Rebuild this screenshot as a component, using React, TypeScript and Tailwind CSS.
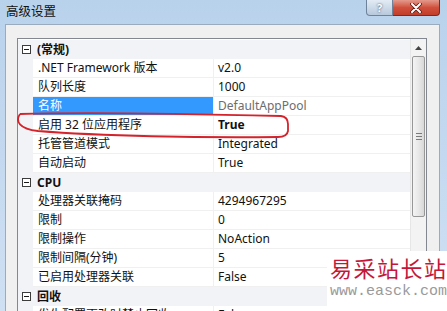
import React from "react";

type Row = { name: string; value: string; selected?: boolean; bold?: boolean };
type Category = { title: string; rows: Row[] };

const CATEGORIES: Category[] = [
  {
    title: "(常规)",
    rows: [
      { name: ".NET Framework 版本", value: "v2.0" },
      { name: "队列长度", value: "1000" },
      { name: "名称", value: "DefaultAppPool", selected: true },
      { name: "启用 32 位应用程序", value: "True", bold: true },
      { name: "托管管道模式", value: "Integrated" },
      { name: "自动启动", value: "True" },
    ],
  },
  {
    title: "CPU",
    rows: [
      { name: "处理器关联掩码", value: "4294967295" },
      { name: "限制", value: "0" },
      { name: "限制操作", value: "NoAction" },
      { name: "限制间隔(分钟)", value: "5" },
      { name: "已启用处理器关联", value: "False" },
    ],
  },
  {
    title: "回收",
    rows: [{ name: "发生配置更改时禁止回收", value: "False" }],
  },
];

function MinusBox() {
  return (
    <div className="w-[9px] h-[9px] border border-[#3c3c3c] bg-white flex items-center justify-center">
      <div className="w-[5px] h-px bg-[#1a1a1a]" />
    </div>
  );
}

function CategoryRow({ title }: { title: string }) {
  return (
    <div className="flex h-[19px] items-center bg-[#f1f3f7]">
      <div className="w-[15px] flex justify-center pl-[1px]">
        <MinusBox />
      </div>
      <span className="pl-[4px] font-bold text-[12px] text-[#111]">{title}</span>
    </div>
  );
}

function PropRow({ row }: { row: Row }) {
  return (
    <div className="flex h-[19px]">
      <div className="w-[15px] bg-[#f1f3f7]" />
      <div
        className={`w-[180px] flex items-center pl-[5px] border-b border-[#f0f0f0] ${
          row.selected ? "bg-[#3399ff] text-white" : "text-[#111]"
        }`}
      >
        {row.name}
      </div>
      <div className="w-px bg-[#f0f0f0]" />
      <div
        className={`flex-1 flex items-center pl-[4px] border-b border-[#f0f0f0] ${
          row.selected ? "text-[#6d6d6d]" : "text-[#111]"
        } ${row.bold ? "font-bold" : ""}`}
      >
        {row.value}
      </div>
    </div>
  );
}

function Scrollbar() {
  return (
    <div className="w-[16px] bg-[#f3f3f3] border-l border-[#e6e6e6] flex flex-col">
      <div className="h-[17px] flex items-center justify-center">
        <svg width="7" height="4" viewBox="0 0 7 4">
          <path d="M0 4 L3.5 0 L7 4 Z" fill="#444" />
        </svg>
      </div>
      <div className="mx-[1px] h-[161px] rounded-[2px] border border-[#979797] bg-gradient-to-r from-[#f4f4f4] via-[#e8e8e8] to-[#d8d8d8] flex items-center justify-center">
        <div className="flex flex-col gap-[2px]">
          <div className="w-[6px] h-px bg-[#7a7a7a]" />
          <div className="w-[6px] h-px bg-[#7a7a7a]" />
          <div className="w-[6px] h-px bg-[#7a7a7a]" />
        </div>
      </div>
    </div>
  );
}

export default function App() {
  return (
    <div className="relative w-[447px] h-[311px] overflow-hidden bg-gradient-to-b from-[#b9d2ec] to-[#cfe0f3] font-['Noto_Sans','Noto_Sans_CJK_SC',sans-serif] text-[12px]">
      {/* Title bar */}
      <div className="h-[24px] flex items-start">
        <span className="pl-[6px] pt-[4px] text-[12.5px] text-[#111] leading-[16px]">高级设置</span>
        <div className="ml-auto mr-[7px] flex">
          <div className="w-[27px] h-[16px] rounded-bl-[4px] border border-t-0 border-[#6f829b] bg-gradient-to-b from-[#e3ecf5] to-[#b7c8dc] flex items-center justify-center">
            <span className="font-bold text-[11px] leading-[14px] text-white [text-shadow:0_0_2px_#2b3a4e]">?</span>
          </div>
          <div className="w-[47px] h-[16px] rounded-br-[4px] border border-t-0 border-l-0 border-[#7a2a22] bg-gradient-to-b from-[#e39a8c] via-[#d0503d] to-[#c23d2a] flex items-center justify-center">
            <svg width="12" height="10" viewBox="0 0 12 10">
              <path d="M2 1 L10 9 M10 1 L2 9" stroke="#5a1a12" strokeWidth="3.6" strokeLinecap="round" />
              <path d="M2 1 L10 9 M10 1 L2 9" stroke="#ffffff" strokeWidth="2" strokeLinecap="round" />
            </svg>
          </div>
        </div>
      </div>

      {/* Body panel */}
      <div className="ml-[5px] mr-[7px] h-[287px] bg-[#f0f0f0] border-l border-t border-r border-[#9aabbe] pl-[11px] pr-[12px] pt-[13px]">
        <div className="h-[300px] bg-white border border-[#828790] flex">
          <div className="flex-1 pt-[1px]">
            {CATEGORIES.map((cat) => (
              <div key={cat.title}>
                <CategoryRow title={cat.title} />
                {cat.rows.map((row) => (
                  <PropRow key={row.name} row={row} />
                ))}
              </div>
            ))}
          </div>
          <Scrollbar />
        </div>
      </div>

      {/* Red hand-drawn mark */}
      <svg className="absolute left-0 top-0 pointer-events-none" width="447" height="311">
        <path
          d="M20 114 C 80 112, 200 114, 281 116 Q 288 117 288 124 L 288 131 Q 287 137 278 137 C 200 138, 100 136, 38 131 C 19 129, 15 121, 20 114"
          fill="none"
          stroke="#d4232b"
          strokeWidth="1.8"
        />
      </svg>

      {/* Watermark */}
      <div className="absolute left-[327px] top-[251px] w-[120px] h-[60px] bg-white flex flex-col pl-[3px]">
        <span className="text-[22px] leading-[32px] tracking-[1.5px] text-[#c4173a] font-['Noto_Sans_CJK_SC',sans-serif] whitespace-nowrap">
          易采站长站
        </span>
        <span className="text-[15px] leading-[18px] text-[#9a9a9a] font-['Liberation_Mono',monospace] whitespace-nowrap">
          www.easck.com
        </span>
      </div>
    </div>
  );
}
